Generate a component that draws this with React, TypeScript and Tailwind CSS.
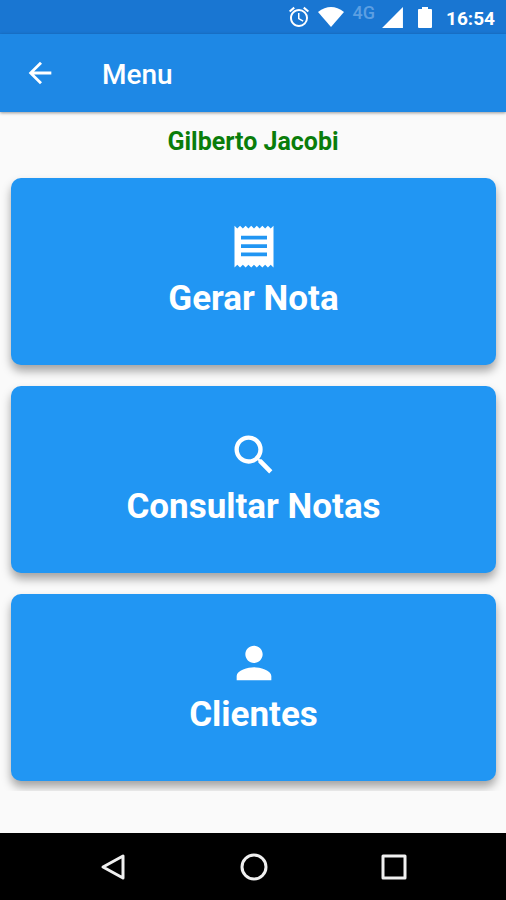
import type { ReactNode } from "react";
import {
    MdAlarm,
    MdArrowBack,
    MdPerson,
    MdSearch,
    MdSignalCellular4Bar,
} from "react-icons/md";

// receipt with seven fine teeth on the top and bottom edges
const ReceiptIcon = ({ className }: { className?: string }) => (
    <svg viewBox="0 0 56 56" className={className} fill="currentColor">
        <path
            fillRule="evenodd"
            d="M7 5l3 3 3-3 3 3 3-3 3 3 3-3 3 3 3-3 3 3 3-3 3 3 3-3 3 3 3-3v45l-3-3-3 3-3-3-3 3-3-3-3 3-3-3-3 3-3-3-3 3-3-3-3 3-3-3-3 3zM14 16v4h28v-4zM14 25v4h28v-4zM14 34v4h28v-4z"
        />
    </svg>
);

const menuItems = [
    { label: "Gerar Nota", icon: ReceiptIcon },
    { label: "Consultar Notas", icon: MdSearch },
    { label: "Clientes", icon: MdPerson },
];

const StatusBar = () => (
    <div className="flex h-[34px] items-center justify-end bg-[#1976d2] pr-[11px] text-white">
        <MdAlarm className="mr-[7px] size-6" />
        <svg viewBox="0 0 26 20" className="mr-[9px] h-5 w-[26px]" fill="currentColor">
            <path d="M0 5Q13-5 26 5L13 20z" />
        </svg>
        <span className="mr-[5px] self-start pt-1 text-lg leading-[18px] font-medium text-[#5c9fe2]">4G</span>
        <MdSignalCellular4Bar className="mr-[13px] size-[25px]" />
        <svg viewBox="0 0 14 21" className="mr-[14px] h-[21px] w-[14px]" fill="currentColor">
            <path d="M4 0h6v2h3a1 1 0 0 1 1 1v17a1 1 0 0 1-1 1H1a1 1 0 0 1-1-1V3a1 1 0 0 1 1-1h3z" />
        </svg>
        <span className="pt-[3px] text-[19px] leading-6 font-bold">16:54</span>
    </div>
);

const AppBar = () => (
    <header className="relative flex h-[78px] items-center bg-[#1e88e5] pl-[23px] text-white shadow-[0_1px_3px_rgba(0,0,0,0.4)]">
        <button type="button" aria-label="Voltar" className="mr-[45px]">
            <MdArrowBack className="size-[34px]" />
        </button>
        <h1 className="pt-1 text-[28px] leading-8 font-medium">Menu</h1>
    </header>
);

const NavButton = ({ label, children }: { label: string; children: ReactNode }) => (
    <button type="button" aria-label={label} className="flex w-[140px] justify-center">
        <svg viewBox="0 0 28 28" className="size-7" fill="none" stroke="#f0f0f0" strokeWidth="3" strokeLinejoin="round">
            {children}
        </svg>
    </button>
);

const App = () => {
    return (
        <div className="flex min-h-screen flex-col bg-[#fafafa] font-[Roboto,sans-serif]">
            <StatusBar />
            <AppBar />

            <main className="grow">
                <p className="pt-[15px] text-center text-[25px] leading-[30px] font-bold text-[#0a7d0a]">
                    Gilberto Jacobi
                </p>
                <div className="flex flex-col gap-[21px] overflow-hidden pt-[21px] pr-[10px] pb-[10px] pl-[11px]">
                    {menuItems.map(({ label, icon: Icon }) => (
                        <button
                            key={label}
                            type="button"
                            className="flex h-[187px] w-full flex-col items-center rounded-[10px] bg-[#2196f3] pt-[43px] text-white shadow-[0_6px_10px_rgba(0,0,0,0.35)]"
                        >
                            <Icon className="size-[52px]" />
                            <span className="mt-1 text-[35px] leading-[44px] font-bold">{label}</span>
                        </button>
                    ))}
                </div>
            </main>

            <nav className="flex h-[67px] items-center justify-center bg-black pl-[2px]">
                <NavButton label="Voltar">
                    <path d="M3 14L23 3V25z" />
                </NavButton>
                <NavButton label="Início">
                    <circle cx="14" cy="14" r="12" />
                </NavButton>
                <NavButton label="Recentes">
                    <rect x="3" y="3" width="22" height="22" />
                </NavButton>
            </nav>
        </div>
    );
};

export default App;
